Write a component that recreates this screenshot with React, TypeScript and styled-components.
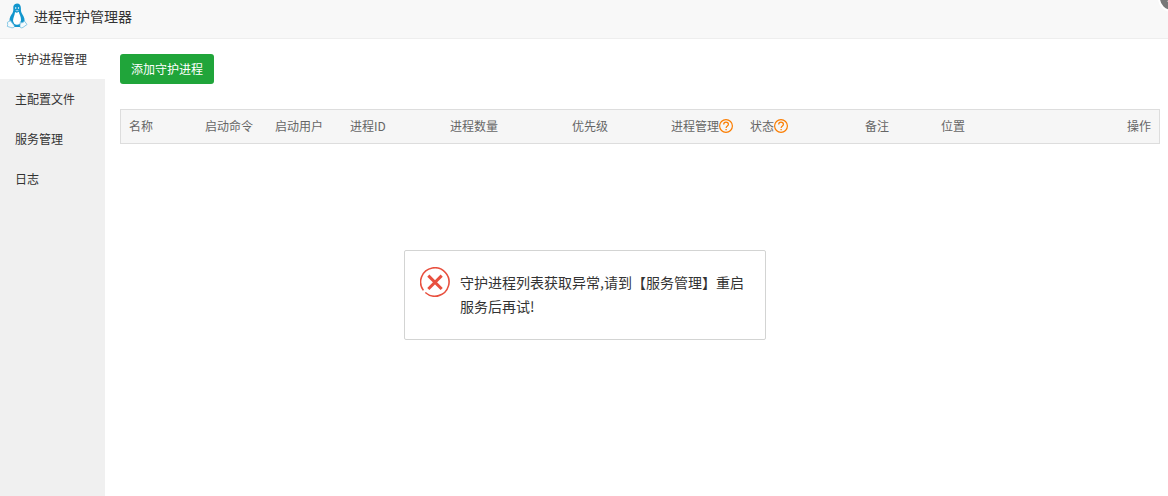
import React, { useState } from "react";
import styled, { createGlobalStyle } from "styled-components";

const GlobalStyle = createGlobalStyle`
  *, *::before, *::after { box-sizing: border-box; }
  body {
    margin: 0;
    background: #fff;
    color: #333;
    font: 12px/18px "Noto Sans CJK SC", "Liberation Sans", sans-serif;
  }
`;

const Dialog = styled.div`
  position: relative;
  display: flex;
  flex-direction: column;
  min-height: 100vh;
  overflow: hidden;
`;

const Header = styled.header`
  display: flex;
  align-items: center;
  gap: 6px;
  height: 39px;
  padding: 0 6px 6px;
  border-bottom: 1px solid #eee;
  background: #f8f8f8;
`;

const Title = styled.h1`
  margin: 0;
  font-size: 14px;
  font-weight: 400;
  line-height: 20px;
`;

const CloseButton = styled.button`
  position: absolute;
  top: -16px;
  right: -18px;
  width: 28px;
  height: 28px;
  padding: 0;
  border: 2px solid #fff;
  border-radius: 50%;
  background: #787878;
  cursor: pointer;

  svg { display: block; }
`;

const Body = styled.div`
  display: flex;
  flex: 1;
`;

const Sidebar = styled.nav`
  display: flex;
  flex-direction: column;
  flex: 0 0 105px;
  background: #f0f0f0;
`;

const Tab = styled.button<{ $active: boolean }>`
  height: 40px;
  padding: 0 15px;
  border: 0;
  background: ${(p) => (p.$active ? "#fff" : "transparent")};
  color: #333;
  font: inherit;
  text-align: left;
  white-space: nowrap;
  cursor: pointer;
`;

const Main = styled.main`
  flex: 1;
  min-width: 0;
  padding: 15px 8px 15px 15px;
`;

const AddButton = styled.button`
  display: block;
  height: 30px;
  margin-bottom: 25px;
  padding: 0 11px;
  border: 0;
  border-radius: 3px;
  background: #20a53a;
  color: #fff;
  font: inherit;
  cursor: pointer;
`;

const Table = styled.table`
  width: 100%;
  table-layout: fixed;
  border: 1px solid #ddd;
  border-spacing: 0;
`;

const HeadCell = styled.th<{ $width?: number; $end?: boolean }>`
  width: ${(p) => (p.$width ? `${p.$width}px` : "auto")};
  height: 33px;
  padding: 0 8px 2px;
  background: #f6f6f6;
  color: #666;
  font-weight: 400;
  text-align: ${(p) => (p.$end ? "right" : "left")};
  white-space: nowrap;
`;

const HeadLabel = styled.span`
  display: inline-flex;
  align-items: center;
`;

const HelpLink = styled.a`
  display: block;
  width: 14px;
  height: 14px;

  svg { display: block; }
`;

const Message = styled.div`
  position: absolute;
  top: 250px;
  left: calc(50% - 180px);
  display: flex;
  gap: 10px;
  width: 362px;
  height: 90px;
  padding: 16px 20px 16px 15px;
  border: 1px solid #d3d4d3;
  border-radius: 2px;
  background: #fff;

  svg { flex: none; }
`;

const MessageText = styled.p`
  margin: 3px 0 0;
  font-size: 14px;
  line-height: 24px;
`;

const PenguinLogo = () => (
  <svg width="22" height="26" viewBox="0 0 22 26" aria-hidden="true">
    <path
      d="M11 0.500C8.200 0.500 7 2.700 7.300 5.400C7.500 8.200 6.900 9.300 5.500 11.600C3.700 14.200 2.800 17.200 4.200 20.400L7.500 24H14.500L18.200 20.500C19.300 17 18.200 13.700 16.200 11C14.900 9.100 14.900 7.300 14.900 5C14.800 2.300 13.700 0.500 11 0.500Z"
      fill="#1296cd"
    />
    <path d="M9 8.900Q11 10.400 12.800 8.800C13.300 11.300 15.200 13.700 15 17.200L14.100 20.500Q11 22.800 8.200 20.700L7 18C7 14.700 8.800 12.300 9 8.900Z" fill="#fff" />
    <ellipse cx="9.700" cy="5.100" rx="0.700" ry="1" fill="#d0ebf7" />
    <ellipse cx="12.500" cy="5.100" rx="0.700" ry="1" fill="#d0ebf7" />
    <path d="M9.200 7.500L11 6.700L13 7.400L11 8.500Z" fill="#8accea" />
    <path d="M1.400 19.300L4.400 17.700L8.600 23.200C8.400 24.900 6.300 25.200 4.600 24.400L1.300 23.400L1.700 21.500Z" fill="#f4fbfe" stroke="#7fc3e2" strokeWidth="0.900" />
    <path d="M14.400 18.800L15.800 20L18.700 18.300L21 21.500L17 24.400C15.600 25.400 13.800 24.900 13.900 23Z" fill="#f4fbfe" stroke="#7fc3e2" strokeWidth="0.900" />
    <path d="M8.600 22.300Q11.200 23.400 13.900 22.300V24H8.600Z" fill="#1296cd" />
  </svg>
);

const HelpIcon = () => (
  <svg width="14" height="14" viewBox="0 0 14 14" fill="none" stroke="#fb7d00" aria-hidden="true">
    <circle cx="7" cy="7" r="6.400" strokeWidth="1.200" />
    <path d="M4.700 5.500C4.700 4.100 5.600 3.200 7 3.200S9.400 4.100 9.400 5.400C9.400 6.900 7.100 7.100 7.100 9" strokeWidth="1.200" />
    <path d="M7.100 10V11.300" strokeWidth="1.300" />
  </svg>
);

const ErrorIcon = () => (
  <svg width="30" height="30" viewBox="0 0 30 30" fill="none" stroke="#e8503f" aria-hidden="true">
    <path d="M3.400 23.400A14.200 14.200 0 1 1 5.300 25.500" strokeWidth="1.600" />
    <path d="M8.300 8.600L21.700 22M21.700 8.600L8.300 22" strokeWidth="3" />
  </svg>
);

const tabs = ["守护进程管理", "主配置文件", "服务管理", "日志"];

const columns: { label: string; width?: number; help?: boolean; end?: boolean }[] = [
  { label: "名称", width: 76 },
  { label: "启动命令", width: 70 },
  { label: "启动用户", width: 75 },
  { label: "进程ID", width: 100 },
  { label: "进程数量", width: 122 },
  { label: "优先级", width: 99 },
  { label: "进程管理", width: 79, help: true },
  { label: "状态", width: 115, help: true },
  { label: "备注", width: 76 },
  { label: "位置", width: 76 },
  { label: "操作", end: true },
];

export default function App() {
  const [active, setActive] = useState(tabs[0]);

  return (
    <>
      <GlobalStyle />
      <Dialog>
        <Header>
          <PenguinLogo />
          <Title>进程守护管理器</Title>
        </Header>
        <CloseButton type="button" aria-label="关闭">
          <svg width="24" height="24" viewBox="0 0 24 24" stroke="#fff" strokeWidth="2" aria-hidden="true">
            <path d="M8 8L16 16M16 8L8 16" />
          </svg>
        </CloseButton>
        <Body>
          <Sidebar>
            {tabs.map((tab) => (
              <Tab key={tab} type="button" $active={tab === active} onClick={() => setActive(tab)}>
                {tab}
              </Tab>
            ))}
          </Sidebar>
          <Main>
            <AddButton type="button">添加守护进程</AddButton>
            <Table>
              <thead>
                <tr>
                  {columns.map((column) => (
                    <HeadCell key={column.label} scope="col" $width={column.width} $end={column.end}>
                      <HeadLabel>
                        {column.label}
                        {column.help && (
                          <HelpLink href="#help" aria-label={`${column.label}说明`}>
                            <HelpIcon />
                          </HelpLink>
                        )}
                      </HeadLabel>
                    </HeadCell>
                  ))}
                </tr>
              </thead>
            </Table>
          </Main>
        </Body>
        <Message role="alert">
          <ErrorIcon />
          <MessageText>守护进程列表获取异常,请到【服务管理】重启服务后再试!</MessageText>
        </Message>
      </Dialog>
    </>
  );
}
